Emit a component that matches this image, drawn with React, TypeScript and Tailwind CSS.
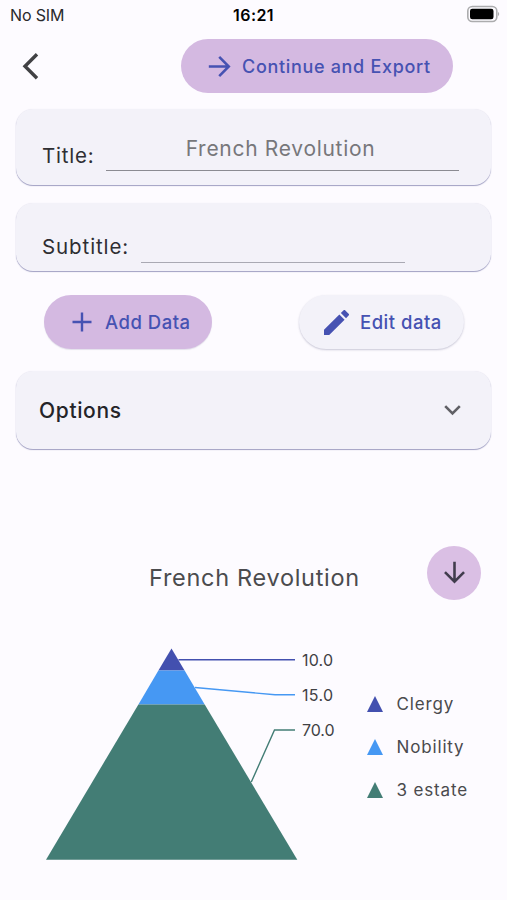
import type { ReactNode } from 'react';

const SERIES = [
  { label: 'Clergy', value: '10.0', color: '#4350af', shape: '141.5,18.5 154.6,40.5 128.4,40.5', line: '148.5,29.7 265,29.7', y: 30 },
  { label: 'Nobility', value: '15.0', color: '#4698f3', shape: '128.4,40.5 154.6,40.5 174.7,74.5 108.4,74.5', line: '165,57.5 245,64.8 265,64.8', y: 65 },
  { label: '3 estate', value: '70.0', color: '#437d75', shape: '108.4,74.5 174.7,74.5 267.3,229.7 16,229.7', line: '221.3,152 244.5,100 265,100', y: 100 },
];

function ArrowIcon({ className }: { className: string }) {
  return (
    <svg viewBox="0 0 24 22" className={className} fill="none" stroke="currentColor" strokeWidth="2.7">
      <path d="M0.8 11H21.5M11.7 1l10 10-10 10" />
    </svg>
  );
}

function Card({ className, children }: { className: string; children?: ReactNode }) {
  return (
    <section
      className={`ml-[16px] mr-[16px] flex rounded-[17px] bg-[#f3f2f9] shadow-[0_1px_1px_rgba(100,100,155,0.6),0_0_1px_rgba(80,80,130,0.1)] ${className}`}
    >
      {children}
    </section>
  );
}

function StatusBar() {
  return (
    <div className="grid h-[38px] grid-cols-3 items-start pt-[4px] text-[16px] leading-[22px] text-[#29292c]">
      <span className="pl-[10px] tracking-[-0.15px]">No SIM</span>
      <span className="text-center font-semibold tracking-[0.4px] text-black">16:21</span>
      <svg viewBox="0 0 34 18" className="mr-[7px] mt-px h-[18px] w-[34px] justify-self-end">
        <rect x="1.8" y="1.5" width="29" height="15" rx="4.5" fill="none" stroke="#acacae" strokeWidth="1.6" />
        <rect x="4" y="3.7" width="23.5" height="10.5" rx="2.3" fill="#000" />
        <path d="M32 6.9c1.6.7 1.6 3.5 0 4.2z" fill="#acacae" />
      </svg>
    </div>
  );
}

function PyramidChart() {
  return (
    <svg viewBox="0 0 310 240" className="h-[240px] w-[310px] shrink-0">
      {SERIES.map((s) => (
        <g key={s.label}>
          <polyline points={s.line} fill="none" stroke={s.color} strokeWidth="1.4" />
          <polygon points={s.shape} fill={s.color} />
          <text x="272" y={s.y + 5.7} fontSize="16" fill="#414144" textLength={s.value === '70.0' ? 32.5 : 31}>
            {s.value}
          </text>
        </g>
      ))}
    </svg>
  );
}

export default function App() {
  return (
    <main className="h-[900px] w-[507px] overflow-hidden bg-[#fdfbff] font-['Inter',sans-serif] text-[#2e2e32]">
      <StatusBar />

      <header className="flex h-[56px] items-center">
        <button className="ml-[22px] text-[#414144]" aria-label="Back">
          <svg viewBox="0 0 17 27" className="h-[27px] w-[17px]" fill="none" stroke="currentColor" strokeWidth="3.4">
            <path d="M15 1.2L3 13.2l12 12" />
          </svg>
        </button>
        <button className="ml-[142px] flex h-[54px] w-[272px] items-center rounded-full bg-[#d4b9e1] pl-[27px] text-[18px] font-medium tracking-[0.68px] text-[#4652b2]">
          <ArrowIcon className="h-[21px] w-[23px]" />
          <span className="ml-[11px] whitespace-nowrap">Continue and Export</span>
        </button>
      </header>

      <Card className="mt-[15px] h-[76px] pl-[26px] pt-[20px]">
        <label className="w-[64px] pt-[14px] text-[20.5px] leading-[26px] tracking-[0.8px]">Title:</label>
        <div className="flex h-[42px] w-[353px] justify-center border-b border-[#8b8b92] pt-[7px] text-[21px] leading-[26px] tracking-[0.7px] text-[#77777b]">
          <span className="whitespace-nowrap pr-1">French Revolution</span>
        </div>
      </Card>

      <Card className="mt-[18px] h-[68px] pl-[26px] pt-[31px]">
        <label className="w-[99px] text-[20.5px] leading-[26px] tracking-[0.9px]">Subtitle:</label>
        <div className="h-[29px] w-[264px] border-b border-[#a9a9b3]" />
      </Card>

      <div className="mt-[24px] flex h-[54px] justify-between pl-[44px] pr-[43px] text-[18.5px] font-medium tracking-[0.5px] text-[#4652b2]">
        <button className="flex w-[168px] items-center rounded-full bg-[#d4b9e1] pl-[28px] shadow-[0_1px_1px_rgba(80,80,120,0.15)]">
          <svg viewBox="0 0 20 20" className="h-[20px] w-[20px]" stroke="currentColor" strokeWidth="2.4">
            <path d="M0.5 10h19M10 .5v19" />
          </svg>
          <span className="ml-[13px] mt-[2px] whitespace-nowrap">Add Data</span>
        </button>
        <button className="flex w-[165px] items-center rounded-full bg-[#f3f2f9] pl-[25px] shadow-[0_1px_2px_rgba(80,80,120,0.3)]">
          <svg viewBox="3 3 18 18" className="h-[25px] w-[25px]" fill="currentColor">
            <path d="M3 17.25V21h3.75L17.81 9.94l-3.75-3.75L3 17.25zM20.71 7.04a1 1 0 0 0 0-1.41l-2.34-2.34a1 1 0 0 0-1.41 0l-1.83 1.83 3.75 3.75 1.83-1.83z" />
          </svg>
          <span className="ml-[11px] mt-[2px] whitespace-nowrap">Edit data</span>
        </button>
      </div>

      <Card className="mt-[22px] h-[78px] items-center justify-between pl-[23px] pr-[30px]">
        <span className="mt-[2px] text-[21px] font-medium tracking-[0.65px] text-[#242428]">Options</span>
        <svg viewBox="0 0 17 11" className="h-[11px] w-[17px]" fill="none" stroke="#606066" strokeWidth="2.6">
          <path d="M1.2 1.2l7.3 7.3 7.3-7.3" />
        </svg>
      </Card>

      <div className="mt-[96px] flex h-[55px] items-center pl-[149px]">
        <h1 className="mt-[11px] w-[278px] whitespace-nowrap text-[23.5px] tracking-[0.7px] text-[#4b4b4e]">French Revolution</h1>
        <button className="flex h-[54px] w-[54px] items-center justify-center rounded-full bg-[#dabfe4] text-[#413c4d]" aria-label="Download">
          <ArrowIcon className="h-[21px] w-[23px] rotate-90" />
        </button>
      </div>

      <div className="mt-[30px] flex pl-[30px]">
        <PyramidChart />
        <ul className="ml-[27px] mt-[52px] text-[17px] tracking-[0.85px] text-[#4a4a4d]">
          {SERIES.map((s) => (
            <li key={s.label} className="flex h-[43px] items-center">
              <svg viewBox="0 0 16 16" className="h-4 w-4" fill={s.color}>
                <path d="M8 0l8 16H0z" />
              </svg>
              <span className="ml-[13.5px] mt-[2px] whitespace-nowrap">{s.label}</span>
            </li>
          ))}
        </ul>
      </div>
    </main>
  );
}
